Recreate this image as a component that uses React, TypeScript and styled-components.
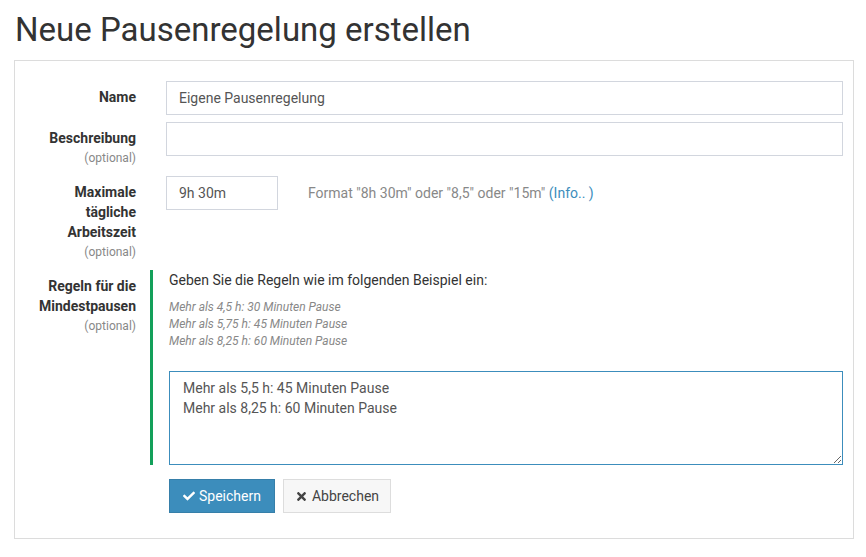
import styled, { createGlobalStyle } from 'styled-components';
import React, { useState } from 'react';
import { FaCheck, FaTimes } from 'react-icons/fa';

const GlobalStyle = createGlobalStyle`
  body {
    margin: 0;
    background: #fff;
    font-family: Roboto, "Liberation Sans", sans-serif;
    font-size: 14px;
    color: #333;
  }
  * { box-sizing: border-box; }
`

const App = () => {
  const [name, setName] = useState<string>("Eigene Pausenregelung")
  const [description, setDescription] = useState<string>("")
  const [maxTime, setMaxTime] = useState<string>("9h 30m")
  const [rules, setRules] = useState<string>("Mehr als 5,5 h: 45 Minuten Pause\nMehr als 8,25 h: 60 Minuten Pause")

  return (
    <Page>
      <GlobalStyle />
      <Title>Neue Pausenregelung erstellen</Title>
      <Panel>
        <Row>
          <Label htmlFor="name">Name</Label>
          <Field>
            <Input id="name" value={name} onChange={e => setName(e.target.value)} />
          </Field>
        </Row>
        <Row $gap={8}>
          <Label htmlFor="description">
            Beschreibung
            <Optional>(optional)</Optional>
          </Label>
          <Field>
            <Input id="description" value={description} onChange={e => setDescription(e.target.value)} />
          </Field>
        </Row>
        <Row $gap={8}>
          <Label htmlFor="maxTime">
            Maximale tägliche Arbeitszeit
            <Optional>(optional)</Optional>
          </Label>
          <InlineField>
            <Input id="maxTime" $width={112} value={maxTime} onChange={e => setMaxTime(e.target.value)} />
            <Hint>Format "8h 30m" oder "8,5" oder "15m" <InfoLink href="#">(Info.. )</InfoLink></Hint>
          </InlineField>
        </Row>
        <Row $gap={0}>
          <Label htmlFor="rules">
            Regeln für die Mindestpausen
            <Optional>(optional)</Optional>
          </Label>
          <Field $highlight>
            <Intro>Geben Sie die Regeln wie im folgenden Beispiel ein:</Intro>
            <Examples>
              <div>Mehr als 4,5 h: 30 Minuten Pause</div>
              <div>Mehr als 5,75 h: 45 Minuten Pause</div>
              <div>Mehr als 8,25 h: 60 Minuten Pause</div>
            </Examples>
            <TextArea id="rules" value={rules} onChange={e => setRules(e.target.value)} />
          </Field>
        </Row>
        <Row $gap={0}>
          <span />
          <Buttons>
            <Button $primary type="submit"><FaCheck size={12} /> Speichern</Button>
            <Button type="button"><FaTimes size={13} /> Abbrechen</Button>
          </Buttons>
        </Row>
      </Panel>
    </Page>
  );
};

export default App;

const Page = styled.div`
    padding: 0 12px 0 14px;
    width: 866px;
`

const Title = styled.h1`
    margin: 0;
    padding: 11px 0 11px 1px;
    font-size: 33px;
    font-weight: 400;
    line-height: 38px;
    color: #333;
`

const Panel = styled.div`
    border: 1px solid #dcdcdc;
    padding: 20px 10px 25px 0;
`

const Row = styled.div<{ $gap?: number }>`
    display: grid;
    grid-template-columns: 121px 1fr;
    column-gap: 30px;
    margin-bottom: ${p => p.$gap ?? 7}px;
`

const Label = styled.label`
    padding: 6px 0 0 22px;
    text-align: right;
    font-weight: 700;
    line-height: 20px;
    color: #333;
`

const Optional = styled.span`
    display: block;
    font-weight: 400;
    font-size: 12px;
    line-height: 20px;
    color: #888;
`

const Field = styled.div<{ $highlight?: boolean }>`
    display: flex;
    flex-direction: column;
    ${p => p.$highlight && `
      margin-left: -16px;
      border-left: 3px solid #13a05a;
      padding-left: 16px;
    `}
`

const InlineField = styled.div`
    display: flex;
    align-items: flex-start;
    gap: 30px;
`

const Input = styled.input<{ $width?: number }>`
    width: ${p => p.$width ? `${p.$width}px` : '100%'};
    height: 34px;
    padding: 6px 12px;
    border: 1px solid #d2d6de;
    font-family: inherit;
    font-size: 14px;
    color: #555;
    outline: none;
`

const Hint = styled.span`
    color: #888;
    font-size: 14px;
    line-height: 34px;
`

const InfoLink = styled.a`
    color: #3c8dbc;
    text-decoration: none;
`

const Intro = styled.div`
    line-height: 20px;
    color: #333;
`

const Examples = styled.div`
    margin-top: 9px;
    font-size: 12px;
    font-style: italic;
    line-height: 17px;
    color: #888;
`

const TextArea = styled.textarea`
    margin-top: 21px;
    width: 100%;
    height: 94px;
    padding: 6px 13px;
    border: 1px solid #3c8dbc;
    font-family: inherit;
    font-size: 14px;
    line-height: 20px;
    color: #555;
    outline: none;
    resize: both;
`

const Buttons = styled.div`
    display: flex;
    gap: 8px;
    padding-left: 3px;
    margin-top: 14px;
`

const Button = styled.button<{ $primary?: boolean }>`
    display: inline-flex;
    align-items: center;
    gap: 4px;
    height: 34px;
    padding: 0 ${p => p.$primary ? 13 : 11}px;
    border: 1px solid ${p => p.$primary ? '#367fa9' : '#ddd'};
    background: ${p => p.$primary ? '#3c8dbc' : '#f7f7f7'};
    color: ${p => p.$primary ? '#fff' : '#444'};
    font-family: inherit;
    font-size: 14px;
    cursor: pointer;
`
